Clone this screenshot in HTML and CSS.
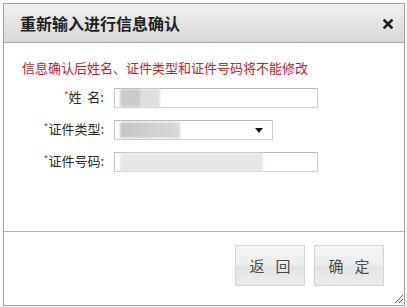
FILE: index.html
```html
<!DOCTYPE html>
<html lang="zh-CN">
<head>
<meta charset="utf-8">
<title>重新输入进行信息确认</title>
<link rel="stylesheet" href="styles.css">
</head>
<body>
<div class="dialog">
  <div class="header">
    <span class="title">重新输入进行信息确认</span>
    <svg class="close" width="10" height="10" viewBox="0 0 10 10"><path d="M1.5 1.5 L8.5 8.5 M8.5 1.5 L1.5 8.5" stroke="#1e1e1e" stroke-width="2.6" stroke-linecap="square"/></svg>
  </div>
  <div class="body">
    <div class="warn">信息确认后姓名、证件类型和证件号码将不能修改</div>
    <div class="form">
      <div class="label"><span class="req">*</span>姓&nbsp;&nbsp;名:</div>
      <div class="input wide"><span class="mask mask-name"><i class="a"></i><i class="b"></i></span></div>
      <div class="label"><span class="req">*</span>证件类型:</div>
      <div class="input select"><span class="mask mask-type"></span><span class="arrow"></span></div>
      <div class="label"><span class="req">*</span>证件号码:</div>
      <div class="input wide"><span class="mask mask-id"></span></div>
    </div>
  </div>
  <div class="footer">
    <div class="btn">返回</div>
    <div class="btn">确定</div>
  </div>
  <svg class="grip" width="11" height="11" viewBox="0 0 11 11"><path d="M10 2 L2 10 M10 6 L6 10" stroke="#555" stroke-width="1"/></svg>
</div>
</body>
</html>
```
FILE: styles.css
```css
* { box-sizing: border-box; }
html, body { margin: 0; padding: 0; background: #fff; }
body { font-family: "Noto Sans CJK SC", "Liberation Sans", sans-serif; }

.dialog {
  margin: 3px 0 0 3px;
  width: 402px;
  height: 303px;
  border: 1px solid #a3a3a3;
  display: flex;
  flex-direction: column;
  position: relative;
  background: #fff;
}

.header {
  height: 39px;
  flex: none;
  border-bottom: 1px solid #a9a9a9;
  background: linear-gradient(#f1f1f1, #d7d7d7);
  display: flex;
  align-items: center;
  justify-content: space-between;
  padding: 0 11px 0 16px;
}
.title {
  font-size: 16px;
  font-weight: bold;
  color: #1f1f1f;
  letter-spacing: 0;
}
.close { display: block; margin-top: 1px; }

.body {
  flex: 1;
  padding: 17px 0 0 18px;
}
.warn {
  font-size: 13px;
  line-height: 16px;
  color: #c0232b;
}

.form {
  display: grid;
  grid-template-columns: 82px auto;
  row-gap: 11px;
  column-gap: 10px;
  margin-top: 11px;
  align-items: center;
  justify-items: start;
}
.label {
  justify-self: end;
  font-size: 13px;
  line-height: 20px;
  color: #2a2a2a;
  white-space: nowrap;
}
.req {
  color: #d0303a;
  font-size: 10px;
  position: relative;
  top: -3px;
}

.input {
  height: 20px;
  border: 1px solid #cfcfcf;
  border-top-color: #b9b9b9;
  border-left-color: #c2c2c2;
  background: #fff;
  position: relative;
  display: flex;
  align-items: stretch;
  padding-left: 5px;
}
.wide { width: 204px; }
.select { width: 159px; }

.mask { display: flex; filter: blur(0.8px); }
.mask i { display: block; }
.mask-name .a { width: 20px; background: #cbcbcb; }
.mask-name .b { width: 20px; background: #dedede; }
.mask-type { width: 60px; margin: 1px 0; background: linear-gradient(90deg, #c6c6c6, #d2d2d2 60%, #d8d8d8); }
.mask-id { width: 143px; background: #e6e6e6; }

.arrow {
  position: absolute;
  right: 9px;
  top: 7px;
  width: 0;
  height: 0;
  border-left: 4px solid transparent;
  border-right: 4px solid transparent;
  border-top: 5px solid #111;
}

.footer {
  height: 74px;
  flex: none;
  border-top: 1px solid #b0b0b0;
  display: flex;
  justify-content: flex-end;
  align-items: flex-start;
  gap: 9px;
  padding: 13px 20px 0 0;
}
.btn {
  width: 70px;
  height: 41px;
  border: 1px solid #d4d4d4;
  background: linear-gradient(#f5f5f5, #ececec 50%, #e3e3e3 52%, #ebebeb);
  font-size: 15px;
  color: #4a4a4a;
  display: flex;
  align-items: center;
  justify-content: center;
  letter-spacing: 11px;
  text-indent: 11px;
}

.grip {
  position: absolute;
  right: 0;
  bottom: 1px;
}
```
